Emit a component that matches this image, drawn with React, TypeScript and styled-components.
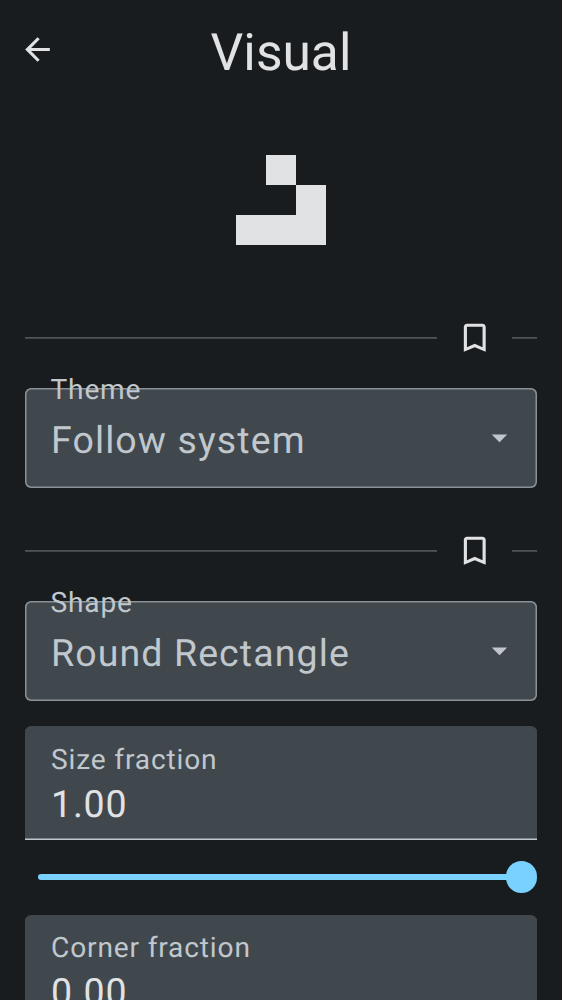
import React from "react";
import styled, { createGlobalStyle } from "styled-components";

const color = {
  background: "#191c1e",
  onSurface: "#e1e2e4",
  container: "#41484d",
  onContainer: "#c0c7cd",
  outline: "#8b9297",
  divider: "#4f5355",
  primary: "#78d1ff",
};

const GlobalStyle = createGlobalStyle`
  * { box-sizing: border-box; }
  html, body { margin: 0; height: 100%; background: ${color.background}; }
  body { overflow: hidden; }
`;

const Screen = styled.main`
  height: 1000px;
  overflow: hidden;
  padding: 0 25px;
  background: ${color.background};
  color: ${color.onSurface};
  font-family: Roboto, "Liberation Sans", sans-serif;
  text-rendering: geometricPrecision;
`;

const Header = styled.header`
  display: grid;
  grid-template-columns: 37px 1fr 37px;
  align-items: center;
  height: 100px;
  margin: 0 -6px;
`;

const Title = styled.h1`
  margin: 0;
  padding-top: 6px;
  font-size: 51.5px;
  line-height: 60px;
  font-weight: 400;
  text-align: center;
`;

const BackButton = styled.button`
  display: flex;
  padding: 0 0 1px;
  border: 0;
  background: none;
  color: inherit;
`;

const Icon = styled.svg<{ $size?: number }>`
  display: block;
  flex: none;
  width: ${(p) => p.$size ?? 37.5}px;
  height: ${(p) => p.$size ?? 37.5}px;
  fill: currentColor;
`;

const Preview = styled.div`
  display: grid;
  grid-template-columns: repeat(3, 30px);
  grid-auto-rows: 30px;
  justify-content: center;
  padding-top: 55px;
  height: 200px;
`;

const Cell = styled.div<{ $alive: boolean }>`
  background: ${(p) => (p.$alive ? color.onSurface : "transparent")};
`;

const BookmarkRow = styled.div`
  display: flex;
  align-items: center;
  gap: 18.75px;
  height: 56px;
  padding-top: 18.5px;
`;

const Rule = styled.div<{ $width?: number }>`
  flex: ${(p) => (p.$width ? `0 0 ${p.$width}px` : "1")};
  height: 2px;
  margin-top: 1.5px;
  background: linear-gradient(${color.divider} 50%, #42464a 50%);
`;

const Select = styled.div`
  position: relative;
  display: flex;
  align-items: center;
  justify-content: space-between;
  height: 100.5px;
  margin: 31.5px 0 25px;
  padding: 3px 19px 0 26px;
  box-shadow: inset 0 0 0 1.5px ${color.outline};
  border-radius: 6.25px;
  background: ${color.container};
  color: ${color.onContainer};
`;

const SelectLabel = styled.span`
  position: absolute;
  left: 25.5px;
  top: -14.5px;
  font-size: 28.1px;
  line-height: 34px;
  letter-spacing: 0.83px;
`;

const SelectValue = styled.span`
  padding-top: 3px;
  font-size: 37.5px;
  line-height: 44px;
  letter-spacing: 1.1px;
`;

const DropdownIcon = styled(Icon)`
  margin-top: -3px;
`;

const NumberField = styled.div`
  height: 113.5px;
  padding: 16.75px 26px 0;
  box-shadow: inset 0 -1.5px 0 ${color.onContainer};
  border-radius: 6.25px 6.25px 0 0;
  background: ${color.container};
`;

const FieldLabel = styled.div`
  font-size: 28.1px;
  line-height: 34px;
  letter-spacing: 0.85px;
  color: ${color.onContainer};
`;

const FieldValue = styled.div`
  margin-top: 6px;
  font-size: 37.5px;
  line-height: 44px;
  letter-spacing: 0.8px;
`;

const Slider = styled.div`
  display: flex;
  align-items: center;
  height: 75px;
  padding-left: 12.5px;
`;

const Track = styled.div`
  flex: 1;
  height: 6.25px;
  margin-right: -4px;
  border-radius: 3.125px;
  background: ${color.primary};
`;

const Thumb = styled.div`
  width: 31.25px;
  height: 31.25px;
  border-radius: 50%;
  background: ${color.primary};
`;

const glider = [false, true, false, false, false, true, true, true, true];

function BookmarkDivider() {
  return (
    <BookmarkRow>
      <Rule />
      <Icon viewBox="0 0 24 24">
        <path d="M17 3H7c-1.1 0-1.99.9-1.99 2L5 21l7-3 7 3V5c0-1.1-.9-2-2-2zm0 15-5-2.18L7 18V5h10v13z" />
      </Icon>
      <Rule $width={25} />
    </BookmarkRow>
  );
}

function SelectField({ label, value }: { label: string; value: string }) {
  return (
    <Select>
      <SelectLabel>{label}</SelectLabel>
      <SelectValue>{value}</SelectValue>
      <DropdownIcon $size={37} viewBox="0 0 24 24">
        <path d="m7 10 5 5 5-5z" />
      </DropdownIcon>
    </Select>
  );
}

function FractionField({ label, value }: { label: string; value: string }) {
  return (
    <NumberField>
      <FieldLabel>{label}</FieldLabel>
      <FieldValue>{value}</FieldValue>
    </NumberField>
  );
}

export default function App() {
  return (
    <>
      <GlobalStyle />
      <Screen>
        <Header>
          <BackButton aria-label="Back">
            <Icon $size={37} viewBox="0 0 24 24">
              <path d="M20 11H7.83l5.59-5.59L12 4l-8 8 8 8 1.41-1.41L7.83 13H20v-2z" />
            </Icon>
          </BackButton>
          <Title>Visual</Title>
        </Header>
        <Preview>
          {glider.map((alive, i) => (
            <Cell key={i} $alive={alive} />
          ))}
        </Preview>
        <BookmarkDivider />
        <SelectField label="Theme" value="Follow system" />
        <BookmarkDivider />
        <SelectField label="Shape" value="Round Rectangle" />
        <FractionField label="Size fraction" value="1.00" />
        <Slider>
          <Track />
          <Thumb />
        </Slider>
        <FractionField label="Corner fraction" value="0.00" />
      </Screen>
    </>
  );
}
